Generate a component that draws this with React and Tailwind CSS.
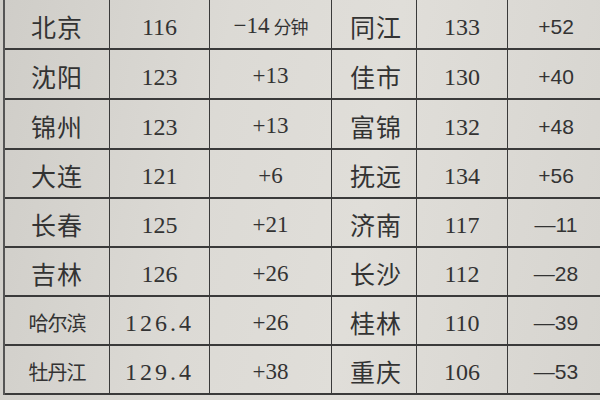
import React from 'react';

const rows = [
  { a: '北京', b: '116', c: '−14', cUnit: true, d: '同江', e: '133', f: '+52' },
  { a: '沈阳', b: '123', c: '+13', d: '佳市', e: '130', f: '+40' },
  { a: '锦州', b: '123', c: '+13', d: '富锦', e: '132', f: '+48' },
  { a: '大连', b: '121', c: '+6', d: '抚远', e: '134', f: '+56' },
  { a: '长春', b: '125', c: '+21', d: '济南', e: '117', f: '—11' },
  { a: '吉林', b: '126', c: '+26', d: '长沙', e: '112', f: '—28' },
  { a: '哈尔滨', b: '126.4', c: '+26', d: '桂林', e: '110', f: '—39', small: true },
  { a: '牡丹江', b: '129.4', c: '+38', d: '重庆', e: '106', f: '—53', small: true },
];

const heights = ['h-[50px]', 'h-[50px]', 'h-[50px]', 'h-[49px]', 'h-[49px]', 'h-[49px]', 'h-[49px]', 'h-[49px]'];

const cjk = "font-['Noto_Sans_CJK_SC',sans-serif]";
const serif = "font-['Liberation_Serif','Noto_Sans_CJK_SC',serif]";
const sans = "font-['Liberation_Sans',sans-serif]";

export default function App() {
  return (
    <div className="w-[600px] h-[400px] overflow-hidden bg-[linear-gradient(100deg,#cfcdc8_0%,#dcdad5_35%,#e0ded9_60%,#d6d4cf_100%)] text-[#333] pl-[3px]">
      <div className="border-l-2 border-[#555]">
        {rows.map((r, i) => (
          <div
            key={i}
            className={`grid grid-cols-[105px_100px_122px_85px_91px_1fr] border-b-2 border-[#3a3a3a] ${heights[i]}`}
          >
            <div className={`flex items-center justify-center pt-[5px] border-r-[1.5px] border-[#3a3a3a] ${cjk} ${r.small ? 'text-[20px] tracking-[-1px]' : 'text-[25px] tracking-[1px]'}`}>
              {r.a}
            </div>
            <div className={`flex items-center justify-center pt-[5px] border-r-[1.5px] border-[#3a3a3a] ${serif} text-[24px] ${r.small ? 'tracking-[3px]' : ''}`}>
              {r.b}
            </div>
            <div className={`flex items-center justify-center pt-[5px] border-r-[1.5px] border-[#3a3a3a] ${serif} text-[23px]`}>
              {r.c}
              {r.cUnit && <span className={`${cjk} text-[18px] ml-1 tracking-[-1px]`}>分钟</span>}
            </div>
            <div className={`flex items-center justify-center pt-[5px] border-r-[1.5px] border-[#3a3a3a] ${cjk} text-[25px] tracking-[1px] pl-1`}>
              {r.d}
            </div>
            <div className={`flex items-center justify-center pt-[5px] border-r-[1.5px] border-[#3a3a3a] ${serif} text-[24px]`}>
              {r.e}
            </div>
            <div className={`flex items-center justify-center pt-[5px] ${sans} text-[21px] pl-1`}>
              {r.f}
            </div>
          </div>
        ))}
      </div>
    </div>
  );
}
